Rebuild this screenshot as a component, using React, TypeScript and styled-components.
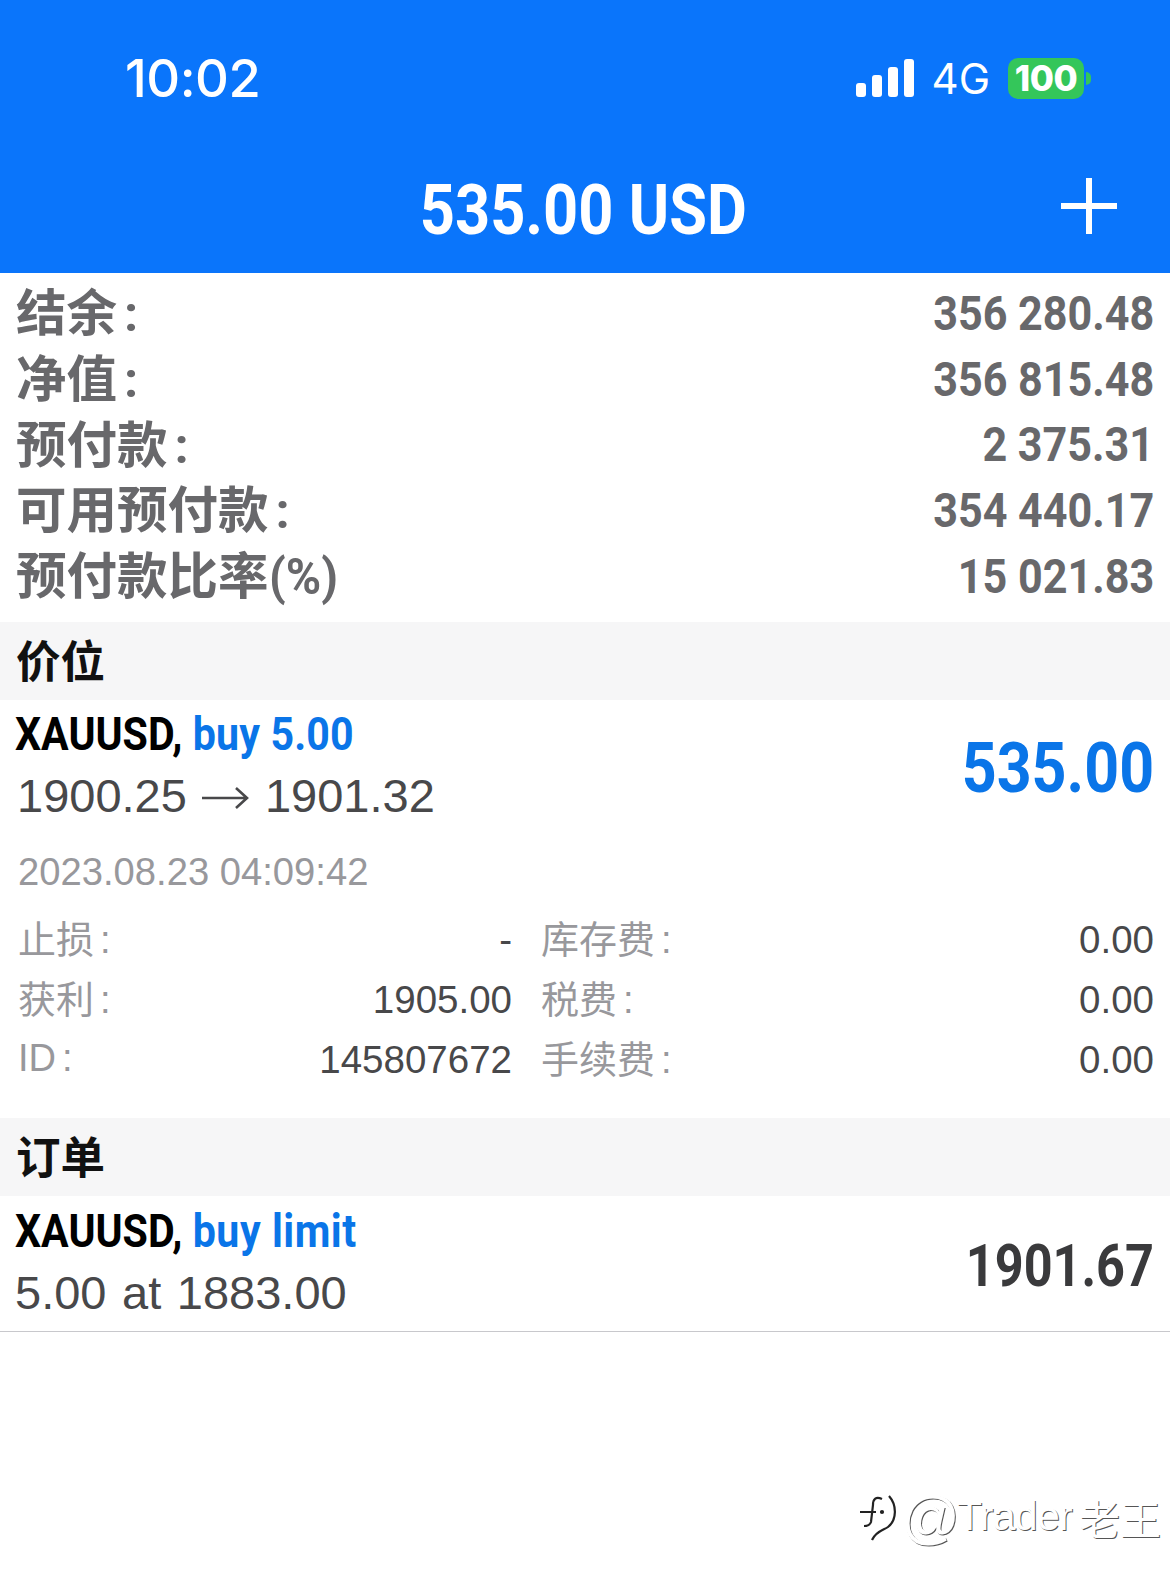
import React from "react";
import styled, { createGlobalStyle } from "styled-components";

const Global = createGlobalStyle`
  html, body { margin: 0; padding: 0; background: #fff; }
  body { font-family: "Liberation Sans", "Noto Sans CJK SC", sans-serif; }
`;
const Page = styled.div`
  width: 1170px; height: 1581px; background: #fff; overflow: hidden; position: relative;
`;
const Header = styled.header`
  height: 273px; background: #0a75fb; color: #fff; display: flex; flex-direction: column;
`;
const StatusBar = styled.div`
  height: 156px; display: flex; align-items: center; justify-content: space-between;
  padding: 0 86px 0 125px; box-sizing: border-box;
`;
const Clock = styled.div`
  font-family: Inter, sans-serif; font-size: 52.5px; font-weight: 500; letter-spacing: -0.5px;
`;
const StatusRight = styled.div`
  display: flex; align-items: center;
`;
const Net = styled.span`
  font-family: Inter, sans-serif; font-size: 42px; font-weight: 400; margin: 0 18px 0 16px;
`;
const Battery = styled.div`
  width: 76px; height: 41px; border-radius: 10px; background: #34c65a; color: #fff;
  font-family: Inter, sans-serif; font-weight: 800; font-size: 35px; letter-spacing: -0.5px;
  display: flex; align-items: center; justify-content: center; position: relative;
  &::after {
    content: ""; position: absolute; right: -7px; top: 14px; width: 5px; height: 13px;
    background: #34c65a; border-radius: 0 6px 6px 0;
  }
`;
const TitleBar = styled.div`
  flex: 1; display: flex; align-items: center; justify-content: center; position: relative;
  padding-bottom: 11px;
`;
const Title = styled.div`
  font-family: Roboto, sans-serif; font-weight: 700; font-size: 71px; line-height: 1;
  transform: scaleX(0.864); margin-left: -3px;
`;
const PlusIcon = styled.svg`
  position: absolute; right: 53px; top: 22px;
`;
const Summary = styled.section`
  padding: 8px 16px 6px 16px; height: 349px; box-sizing: border-box;
`;
const SummaryRow = styled.div`
  height: 65.7px; display: flex; justify-content: space-between; align-items: center;
  color: #68686b;
`;
const SummaryLabel = styled.div`
  font-family: Roboto, "Noto Sans CJK SC", sans-serif; font-weight: 700; font-size: 50.5px;
  margin-top: -9px;
`;
const SummaryColon = styled.span`
  margin-left: 7px;
`;
const Percent = styled.span`
  display: inline-block; transform: scaleX(0.95); transform-origin: left center;
`;
const SummaryValue = styled.div`
  font-family: Roboto, sans-serif; font-weight: 700; font-size: 49px; transform-origin: right center;
  transform: scaleX(0.88); margin-top: -1px;
`;
const Section = styled.div`
  height: 78px; background: #f6f6f7; display: flex; align-items: center; padding: 0 0 5px 16px;
  box-sizing: border-box;
  font-family: "Noto Sans CJK SC", sans-serif; font-weight: 700; font-size: 44.5px; color: #111;
`;
const Trade = styled.div`
  display: flex; justify-content: space-between; align-items: center; padding: 2px 16px 0;
`;
const TradeLeft = styled.div`
  display: flex; flex-direction: column;
`;
const TradeHead = styled.div`
  font-family: Roboto, sans-serif; font-weight: 700; font-size: 47px; line-height: 63px; height: 63px;
  color: #000; transform: scaleX(0.875); transform-origin: left center; white-space: nowrap;
  margin-left: -1px;
`;
const Accent = styled.span<{ $ls: number }>`
  color: #0a75e8; letter-spacing: ${(p) => p.$ls}px;
`;
const TradeSub = styled.div`
  font-size: 47px; line-height: 63px; height: 63px; color: #48484a; white-space: nowrap;
  margin-left: ${(p: { $ml: number }) => p.$ml}px; word-spacing: 2.5px; margin-top: -1px;
  display: flex; align-items: center;
`;
const ArrowIcon = styled.svg`
  margin: 4px 16px 0 15px; flex: none;
`;
const Amount = styled.div<{ $size: number; $color: string; $x: number; $mt: number }>`
  font-family: Roboto, sans-serif; font-weight: 700; font-size: ${(p) => p.$size}px;
  color: ${(p) => p.$color}; margin-top: ${(p) => p.$mt}px;
  transform: scaleX(${(p) => p.$x}); transform-origin: right center;
`;
const DateLine = styled.div`
  font-size: 38.2px; color: #98989c; padding: 0 18px; height: 44px; line-height: 44px; margin-top: 23px;
`;
const Details = styled.div`
  display: grid; grid-template-columns: 494px 1fr; column-gap: 29px; padding: 0 16px 0 18px; margin-top: 14px;
  height: 210px;
`;
const DetailColumn = styled.div`
  display: flex; flex-direction: column;
`;
const DetailRow = styled.div`
  height: 60px; display: flex; justify-content: space-between; align-items: center;
`;
const DetailLabel = styled.span<{ $mt: number }>`
  font-family: "Liberation Sans", "Noto Sans CJK SC", sans-serif; font-size: 38px; color: #98989c;
  margin-top: ${(p) => p.$mt}px;
`;
const DetailColon = styled.span`
  margin-left: 6px;
`;
const DetailValue = styled.span`
  font-size: 38.5px; color: #48484a; margin-top: 3px;
`;
const Order = styled(Trade)`
  height: 136px; padding: 0 16px 5px; border-bottom: 1px solid #c8c8cc; box-sizing: border-box;
`;
const Watermark = styled.div`
  position: absolute; right: 9px; top: 1483px; display: flex; align-items: center; gap: 2px;
  font-family: "Liberation Sans", "Noto Sans CJK SC", sans-serif; font-size: 41px;
  color: #fff; text-shadow: 1px 1px 0.5px #555;
`;
const At = styled.span`
  font-size: 58px; margin-right: -5px;
`;
const Handle = styled.span`
  letter-spacing: -0.7px; margin-right: 5px;
`;

const details: [string, string, string, string][] = [
  ["止损", "-", "库存费", "0.00"],
  ["获利", "1905.00", "税费", "0.00"],
  ["ID", "145807672", "手续费", "0.00"],
];
const summary = [
  ["结余", "356 280.48"],
  ["净值", "356 815.48"],
  ["预付款", "2 375.31"],
  ["可用预付款", "354 440.17"],
];

export default function App() {
  return (
    <Page>
      <Global />
      <Header>
        <StatusBar>
          <Clock>10:02</Clock>
          <StatusRight>
            <svg width="60" height="38" viewBox="0 0 60 38" fill="#fff">
              <rect x="0" y="24" width="10" height="14" rx="3" />
              <rect x="16" y="16" width="10" height="22" rx="3" />
              <rect x="32" y="8" width="10" height="30" rx="3" />
              <rect x="48" y="0" width="10" height="38" rx="3" />
            </svg>
            <Net>4G</Net>
            <Battery>100</Battery>
          </StatusRight>
        </StatusBar>
        <TitleBar>
          <Title>535.00 USD</Title>
          <PlusIcon width="56" height="56" viewBox="0 0 56 56" fill="#fff">
            <rect x="0" y="25" width="56" height="6" />
            <rect x="25" y="0" width="6" height="56" />
          </PlusIcon>
        </TitleBar>
      </Header>
      <Summary>
        {summary.map(([l, v]) => (
          <SummaryRow key={l}>
            <SummaryLabel>
              {l}
              <SummaryColon>:</SummaryColon>
            </SummaryLabel>
            <SummaryValue>{v}</SummaryValue>
          </SummaryRow>
        ))}
        <SummaryRow>
          <SummaryLabel>
            预付款比率<Percent>(%)</Percent>
          </SummaryLabel>
          <SummaryValue>15 021.83</SummaryValue>
        </SummaryRow>
      </Summary>
      <Section>价位</Section>
      <Trade>
        <TradeLeft>
          <TradeHead>
            XAUUSD, <Accent $ls={0.2}>buy 5.00</Accent>
          </TradeHead>
          <TradeSub $ml={1}>
            <span>1900.25</span>
            <ArrowIcon width="47" height="24" viewBox="0 0 47 24" fill="none" stroke="#48484a" strokeWidth="2.6">
              <path d="M0 12h45M34 2l11 10-11 10" />
            </ArrowIcon>
            <span>1901.32</span>
          </TradeSub>
        </TradeLeft>
        <Amount $size={70} $color="#0a75e8" $x={0.87} $mt={7}>535.00</Amount>
      </Trade>
      <DateLine>2023.08.23 04:09:42</DateLine>
      <Details>
        <DetailColumn>
          {details.map((d) => (
            <DetailRow key={d[0]}>
              <DetailLabel $mt={d[0] === "ID" ? 1 : -3}>
                {d[0]}
                <DetailColon>:</DetailColon>
              </DetailLabel>
              <DetailValue>{d[1]}</DetailValue>
            </DetailRow>
          ))}
        </DetailColumn>
        <DetailColumn>
          {details.map((d) => (
            <DetailRow key={d[2]}>
              <DetailLabel $mt={-3}>
                {d[2]}
                <DetailColon>:</DetailColon>
              </DetailLabel>
              <DetailValue>{d[3]}</DetailValue>
            </DetailRow>
          ))}
        </DetailColumn>
      </Details>
      <Section>订单</Section>
      <Order>
        <TradeLeft>
          <TradeHead>
            XAUUSD, <Accent $ls={0.6}>buy limit</Accent>
          </TradeHead>
          <TradeSub $ml={-1}>5.00 at 1883.00</TradeSub>
        </TradeLeft>
        <Amount $size={60} $color="#3a3a3c" $x={0.84} $mt={8}>1901.67</Amount>
      </Order>
      <Watermark>
        <svg width="40" height="50" viewBox="0 0 40 50" fill="none" stroke="#222" strokeWidth="2.2">
          <path d="M1 20h16M23 7c-6-3-9 0-9 6l-2 17c-1 3-3 4-7 4" />
          <path d="M30 4c8 9 8 24-1 31-4 3-12 4-16 13" />
          <circle cx="23" cy="20" r="1" fill="#222" />
        </svg>
        <At>@</At>
        <Handle>Trader</Handle>
        <span>老王</span>
      </Watermark>
    </Page>
  );
}
